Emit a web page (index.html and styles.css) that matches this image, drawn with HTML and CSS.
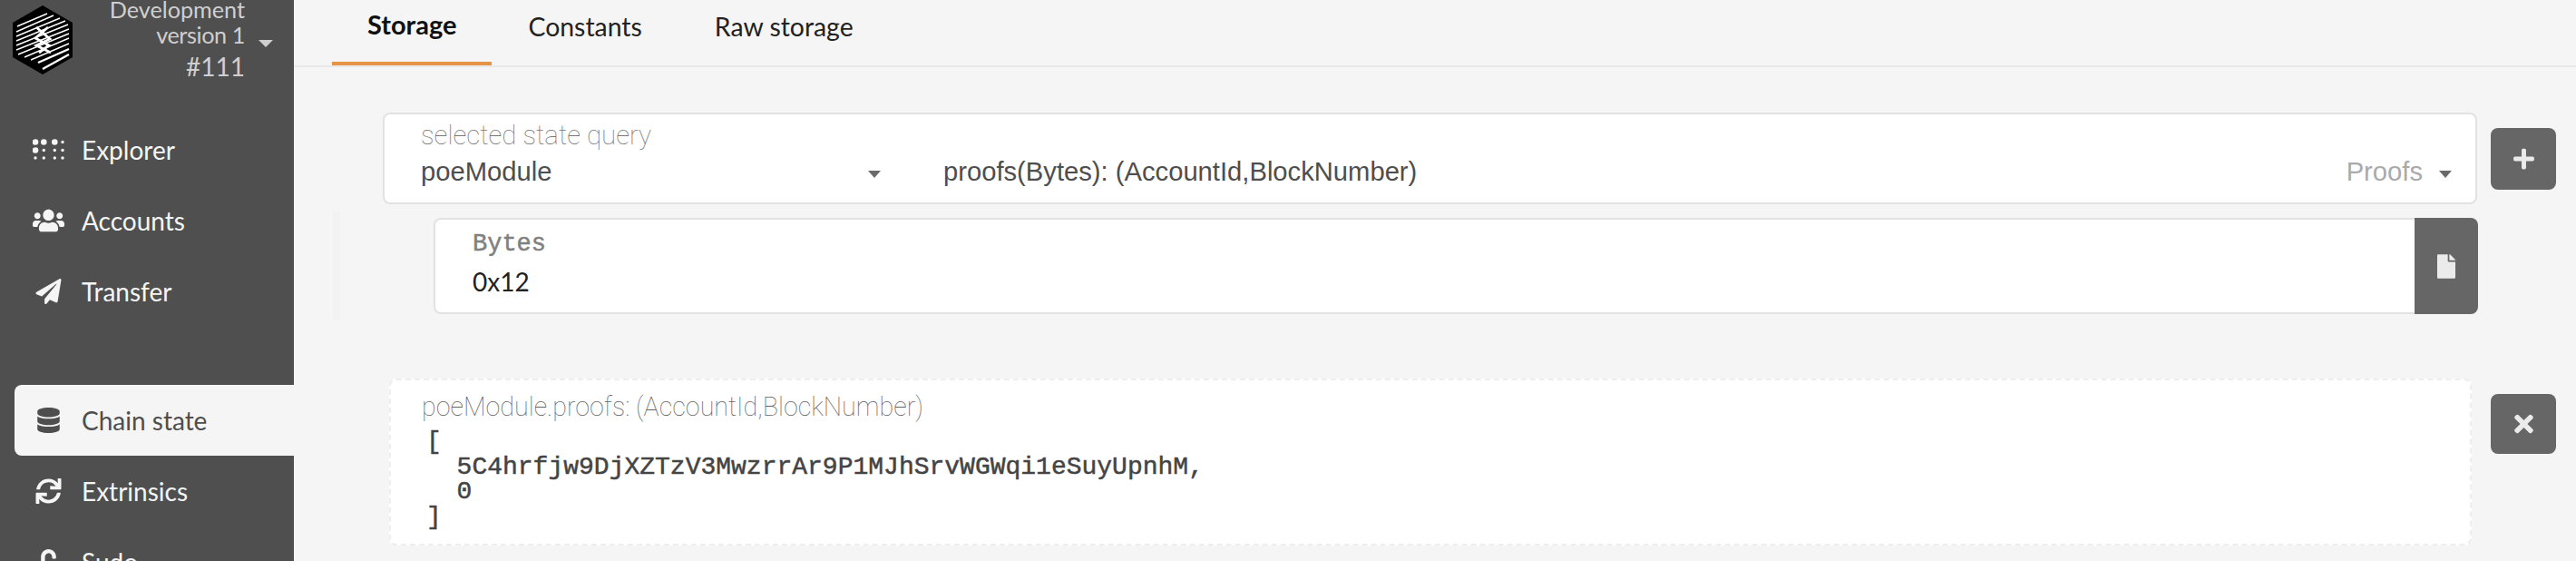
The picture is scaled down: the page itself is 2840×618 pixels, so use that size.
FILE: index.html
```html
<!DOCTYPE html>
<html lang="en">
<head>
    <meta charset="UTF-8">
    <title>Chain state</title>
    <link rel="stylesheet" href="styles.css">
</head>
<body>
    <div class="app">
        <div class="sidebar">
            <div class="chain-info">
                <svg class="logo" viewBox="0 0 66 76">
                    <polygon points="33,0 66,19 66,57 33,76 0,57 0,19" fill="#000"/>
                    <g stroke="#fff" stroke-width="1.4">
                        <line x1="5" y1="23" x2="38" y2="9"/>
                        <line x1="4" y1="29" x2="45" y2="11"/>
                        <line x1="4" y1="34" x2="52" y2="14"/>
                        <line x1="4" y1="39" x2="58" y2="17"/>
                        <line x1="4" y1="44" x2="61" y2="21"/>
                        <line x1="4" y1="49" x2="62" y2="26"/>
                        <line x1="6" y1="54" x2="62" y2="31"/>
                        <line x1="13" y1="57" x2="62" y2="36"/>
                        <line x1="20" y1="60" x2="62" y2="42"/>
                    </g>
                    <g stroke="#fff" stroke-width="2.4">
                        <line x1="28" y1="63" x2="62" y2="48"/>
                        <line x1="33" y1="70" x2="62" y2="54"/>
                    </g>
                    <path d="M26 24 L41 37 L26 44 L42 52 M39 24 L25 36 L40 44 L29 52" fill="none" stroke="#fff" stroke-width="2.8"/>
                </svg>
                <div class="chain-text">
                    <div>Development</div>
                    <div class="chain-version">version 1</div>
                    <div class="chain-block">#111</div>
                </div>
                <span class="caret caret-light"></span>
            </div>

            <div class="nav">
                <a class="nav-item">
                    <svg class="nav-icon" viewBox="0 0 35 24" fill="currentColor">
                        <circle cx="3" cy="3.5" r="3.3"/><circle cx="12.3" cy="3.5" r="3.3"/><circle cx="24.3" cy="3.5" r="3.3"/><circle cx="33" cy="3.5" r="1.7"/>
                        <circle cx="3" cy="12.5" r="3.3"/><circle cx="12.3" cy="12.5" r="1.7"/><circle cx="24.3" cy="12.5" r="1.7"/><circle cx="33" cy="12.5" r="1.7"/>
                        <circle cx="3" cy="21" r="1.7"/><circle cx="12.3" cy="21" r="1.7"/><circle cx="24.3" cy="21" r="1.7"/><circle cx="33" cy="21" r="1.7"/>
                    </svg>
                    Explorer
                </a>
                <a class="nav-item">
                    <svg class="nav-icon" viewBox="0 0 640 512" fill="currentColor"><path d="M96 224c35.3 0 64-28.7 64-64s-28.7-64-64-64-64 28.7-64 64 28.7 64 64 64zm448 0c35.3 0 64-28.7 64-64s-28.7-64-64-64-64 28.7-64 64 28.7 64 64 64zm32 32h-64c-17.6 0-33.5 7.1-45.1 18.6 40.3 22.1 68.9 62 75.1 109.4h66c17.7 0 32-14.3 32-32v-32c0-35.3-28.7-64-64-64zm-256 0c61.9 0 112-50.1 112-112S381.9 32 320 32 208 82.1 208 144s50.1 112 112 112zm76.8 32h-8.3c-20.8 10-43.9 16-68.5 16s-47.6-6-68.5-16h-8.3C179.6 288 128 339.6 128 403.2V432c0 26.5 21.5 48 48 48h288c26.5 0 48-21.5 48-48v-28.8c0-63.6-51.6-115.2-115.2-115.2zm-223.7-13.4C161.5 263.1 145.6 256 128 256H64c-35.3 0-64 28.7-64 64v32c0 17.7 14.3 32 32 32h65.9c6.3-47.4 34.9-87.3 75.2-109.4z"/></svg>
                    Accounts
                </a>
                <a class="nav-item">
                    <svg class="nav-icon" viewBox="0 0 512 512" fill="currentColor"><path d="M476 3.2L12.5 270.6c-18.1 10.4-15.8 35.6 2.2 43.2L121 358.4l287.3-253.2c5.5-4.9 13.3 2.6 8.6 8.3L176 407v80.5c0 23.6 28.5 32.9 42.5 15.8L282 426l124.6 52.2c14.2 6 30.4-2.9 33-18.2l72-432C515 7.8 493.3-6.8 476 3.2z"/></svg>
                    Transfer
                </a>
                <div class="nav-gap"></div>
                <a class="nav-item nav-active">
                    <svg class="nav-icon" viewBox="0 0 448 512" fill="currentColor"><path d="M448 73.143v45.714C448 159.143 347.667 192 224 192S0 159.143 0 118.857V73.143C0 32.857 100.333 0 224 0s224 32.857 224 73.143zM448 176v102.857C448 319.143 347.667 352 224 352S0 319.143 0 278.857V176c48.125 33.143 136.208 48.572 224 48.572S399.874 209.143 448 176zm0 160v102.857C448 479.143 347.667 512 224 512S0 479.143 0 438.857V336c48.125 33.143 136.208 48.572 224 48.572S399.874 369.143 448 336z"/></svg>
                    Chain state
                </a>
                <a class="nav-item">
                    <svg class="nav-icon" viewBox="0 0 512 512" fill="currentColor"><path d="M440.65 12.57l4 82.77A247.16 247.16 0 0 0 255.83 8C134.73 8 33.91 94.92 12.29 209.82A12 12 0 0 0 24.09 224h49.05a12 12 0 0 0 11.67-9.26 175.91 175.91 0 0 1 317-56.94l-101.46-4.86a12 12 0 0 0-12.57 12v47.41a12 12 0 0 0 12 12H500a12 12 0 0 0 12-12V12a12 12 0 0 0-12-12h-47.37a12 12 0 0 0-11.98 12.57zM255.83 432a175.61 175.61 0 0 1-146-77.8l101.8 4.87a12 12 0 0 0 12.57-12v-47.4a12 12 0 0 0-12-12H12a12 12 0 0 0-12 12V500a12 12 0 0 0 12 12h47.35a12 12 0 0 0 12-12.6l-4.15-82.57A247.17 247.17 0 0 0 255.83 504c121.11 0 221.93-86.92 243.55-201.82a12 12 0 0 0-11.8-14.18h-49.05a12 12 0 0 0-11.67 9.26A175.86 175.86 0 0 1 255.83 432z"/></svg>
                    Extrinsics
                </a>
                <a class="nav-item">
                    <svg class="nav-icon" viewBox="0 0 448 512" fill="currentColor"><path d="M400 256H152V152.9c0-39.6 31.7-72.5 71.3-72.9 40-.4 72.7 32.1 72.7 72v16c0 13.3 10.7 24 24 24h32c13.3 0 24-10.7 24-24v-16C376 68 307.5-.3 223.5 0 139.5.3 72 69.5 72 153.5V256H48c-26.5 0-48 21.5-48 48v160c0 26.5 21.5 48 48 48h352c26.5 0 48-21.5 48-48V304c0-26.5-21.5-48-48-48z"/></svg>
                    Sudo
                </a>
            </div>
        </div>

        <div class="main">
            <div class="tabs">
                <a class="tab tab-active">Storage</a>
                <a class="tab">Constants</a>
                <a class="tab">Raw storage</a>
            </div>

            <div class="query-row">
                <div class="query-card">
                    <div class="query-label">selected state query</div>
                    <div class="query-values">
                        <div class="query-module">poeModule<span class="caret caret-dark"></span></div>
                        <div class="query-method">proofs(Bytes): (AccountId,BlockNumber)</div>
                        <div class="query-meta">Proofs<span class="caret caret-dark"></span></div>
                    </div>
                </div>
                <button class="btn btn-add">
                    <svg class="plus-icon" viewBox="0 0 448 512" fill="currentColor"><path d="M416 208H272V64c0-17.67-14.33-32-32-32h-32c-17.67 0-32 14.33-32 32v144H32c-17.67 0-32 14.33-32 32v32c0 17.67 14.33 32 32 32h144v144c0 17.67 14.33 32 32 32h32c17.67 0 32-14.33 32-32V304h144c17.67 0 32-14.33 32-32v-32c0-17.67-14.33-32-32-32z"/></svg>
                </button>
            </div>

            <div class="params">
                <div class="param-row">
                    <div class="param-input">
                        <div class="param-label">Bytes</div>
                        <div class="param-value">0x12</div>
                    </div>
                    <button class="btn-file">
                        <svg class="file-icon" viewBox="0 0 384 512" fill="currentColor"><path d="M224 136V0H24C10.7 0 0 10.7 0 24v464c0 13.3 10.7 24 24 24h336c13.3 0 24-10.7 24-24V160H248c-13.2 0-24-10.8-24-24zm160-14.1v6.1H256V0h6.1c6.4 0 12.5 2.5 17 7l97.9 98c4.5 4.5 7 10.6 7 16.9z"/></svg>
                    </button>
                </div>
            </div>

            <div class="result-row">
                <div class="result-card">
                    <div class="result-label">poeModule.proofs: (AccountId,BlockNumber)</div>
                    <pre class="result-value">[
  5C4hrfjw9DjXZTzV3MwzrrAr9P1MJhSrvWGWqi1eSuyUpnhM,
  0
]</pre>
                </div>
                <button class="btn btn-close">
                    <svg class="close-icon" viewBox="0 0 352 512" fill="currentColor"><path d="M242.72 256l100.07-100.07c12.28-12.28 12.28-32.19 0-44.48l-22.24-22.24c-12.28-12.28-32.19-12.28-44.48 0L176 189.28 75.93 89.21c-12.28-12.28-32.19-12.28-44.48 0L9.21 111.45c-12.28 12.28-12.28 32.19 0 44.48L109.28 256 9.21 356.07c-12.28 12.28-12.28 32.19 0 44.48l22.24 22.24c12.28 12.28 32.2 12.28 44.48 0L176 322.72l100.07 100.07c12.28 12.28 32.2 12.28 44.48 0l22.24-22.24c12.28-12.28 12.28-32.19 0-44.48L242.72 256z"/></svg>
                </button>
            </div>
        </div>
    </div>
</body>
</html>
```

FILE: styles.css
```css
* {
    box-sizing: border-box;
}

html, body {
    margin: 0;
    height: 100%;
    overflow: hidden;
}

body {
    font-family: Lato, sans-serif;
    background-color: #f5f5f5;
}

.app {
    display: flex;
    height: 618px;
    overflow: hidden;
}

/* sidebar */
.sidebar {
    width: 324px;
    flex-shrink: 0;
    background-color: #4f4f4f;
    padding-left: 16px;
}

.chain-info {
    display: flex;
    align-items: flex-start;
    height: 126px;
    color: #cfcfcf;
}

.logo {
    width: 66px;
    height: 76px;
    margin: 6px 0 0 -2px;
}

.chain-text {
    width: 190px;
    text-align: right;
    font-size: 25.2px;
    line-height: 29px;
    margin-top: -4px;
}

.chain-version {
    margin-top: -1px;
    letter-spacing: -0.4px;
}

.chain-block {
    margin-top: 4px;
    font-size: 28px;
    line-height: 33px;
}

.nav-item {
    display: flex;
    align-items: center;
    height: 78px;
    padding-left: 20px;
    font-size: 28px;
    color: #f5f5f5;
    border-radius: 8px 0 0 8px;
}

.nav-active {
    background-color: #f5f5f5;
    color: #4e4e4e;
}

.nav-gap {
    height: 64px;
}

.nav-icon {
    width: 35px;
    height: 28px;
    margin-right: 19px;
}

/* tabs */
.main {
    flex: 1;
    min-width: 0;
}

.tabs {
    display: flex;
    height: 74px;
    padding-left: 42px;
    border-bottom: 2px solid #e8e8e8;
}

.tab {
    height: 72px;
    padding: 11px 40px 0;
    font-size: 28.4px;
    line-height: 36px;
    color: #222;
}

.tab-active {
    padding: 9px 39px 0;
    font-size: 29px;
    font-weight: 700;
    color: #111;
    border-bottom: 4px solid #e59445;
}

/* state query */
.query-row {
    display: flex;
    align-items: center;
    margin: 50px 0 0 98px;
}

.query-card {
    width: 2309px;
    height: 101px;
    padding: 7px 26px 0 40px;
    background-color: #fff;
    border: 2px solid #e2e2e2;
    border-radius: 8px;
    color: #4e4e4e;
}

.query-label {
    font-family: Roboto, sans-serif;
    font-weight: 100;
    font-size: 29.4px;
    line-height: 32px;
    color: #777;
}

.query-values {
    display: flex;
    align-items: center;
    font-family: "Liberation Sans", sans-serif;
    font-size: 29.2px;
    line-height: 44px;
    margin-top: 2px;
}

.query-module {
    display: flex;
    align-items: center;
    justify-content: space-between;
    width: 507px;
}

.query-method {
    flex: 1;
    margin-left: 69px;
}

.query-meta {
    display: flex;
    align-items: center;
    color: #aaa;
}

.caret {
    width: 0;
    height: 0;
    border-left: 7px solid transparent;
    border-right: 7px solid transparent;
    border-top: 8px solid #6a6a6a;
}

.caret-dark {
    margin-top: 6px;
}

.query-meta .caret {
    margin-left: 18px;
}

.caret-light {
    margin: 44px 0 0 15px;
    border-left-width: 8px;
    border-right-width: 8px;
    border-top-color: #cfcfcf;
}

.btn {
    display: flex;
    align-items: center;
    justify-content: center;
    padding: 0;
    border: none;
    border-radius: 8px;
    background-color: #666;
    color: #ebebeb;
}

.btn-add {
    width: 72px;
    height: 68px;
    margin-left: 15px;
}

.plus-icon {
    width: 23px;
    height: 26px;
}

.close-icon {
    width: 21px;
    height: 30px;
}

/* bytes param */
.params {
    width: 2365px;
    margin: 8px 0 0 43px;
    padding: 7px 0 7px 103px;
    border-left: 8px solid #f2f2f2;
}

.param-row {
    display: flex;
    height: 106px;
}

.param-input {
    flex: 1;
    padding: 9px 0 0 41px;
    background-color: #fff;
    border: 2px solid #e2e2e2;
    border-right: none;
    border-radius: 8px 0 0 8px;
}

.param-label {
    font-family: "Liberation Mono", monospace;
    font-size: 27px;
    line-height: 36px;
    color: #808080;
    -webkit-text-stroke: 0.5px #808080;
}

.param-value {
    margin-top: 4px;
    font-size: 28px;
    line-height: 38px;
    color: #222;
}

.btn-file {
    display: flex;
    align-items: center;
    justify-content: center;
    width: 70px;
    padding: 0;
    border: none;
    border-radius: 0 8px 8px 0;
    background-color: #666;
    color: #ebebeb;
}

.file-icon {
    width: 20px;
    height: 27px;
}

/* query result */
.result-row {
    display: flex;
    margin: 64px 0 0 105px;
}

.result-card {
    width: 2296px;
    height: 184px;
    padding: 12px 0 0 34px;
    background-color: #fff;
    border: 2px dashed #eee;
    border-radius: 8px;
}

.result-label {
    font-family: Roboto, sans-serif;
    font-weight: 100;
    font-size: 28.7px;
    line-height: 34px;
    color: #666;
}

.result-value {
    margin: 8px 0 0 5px;
    font-family: "Liberation Mono", monospace;
    font-size: 28px;
    line-height: 27.5px;
    color: #444;
    -webkit-text-stroke: 0.5px #444;
}

.btn-close {
    width: 72px;
    height: 66px;
    margin: 17px 0 0 21px;
}
```
